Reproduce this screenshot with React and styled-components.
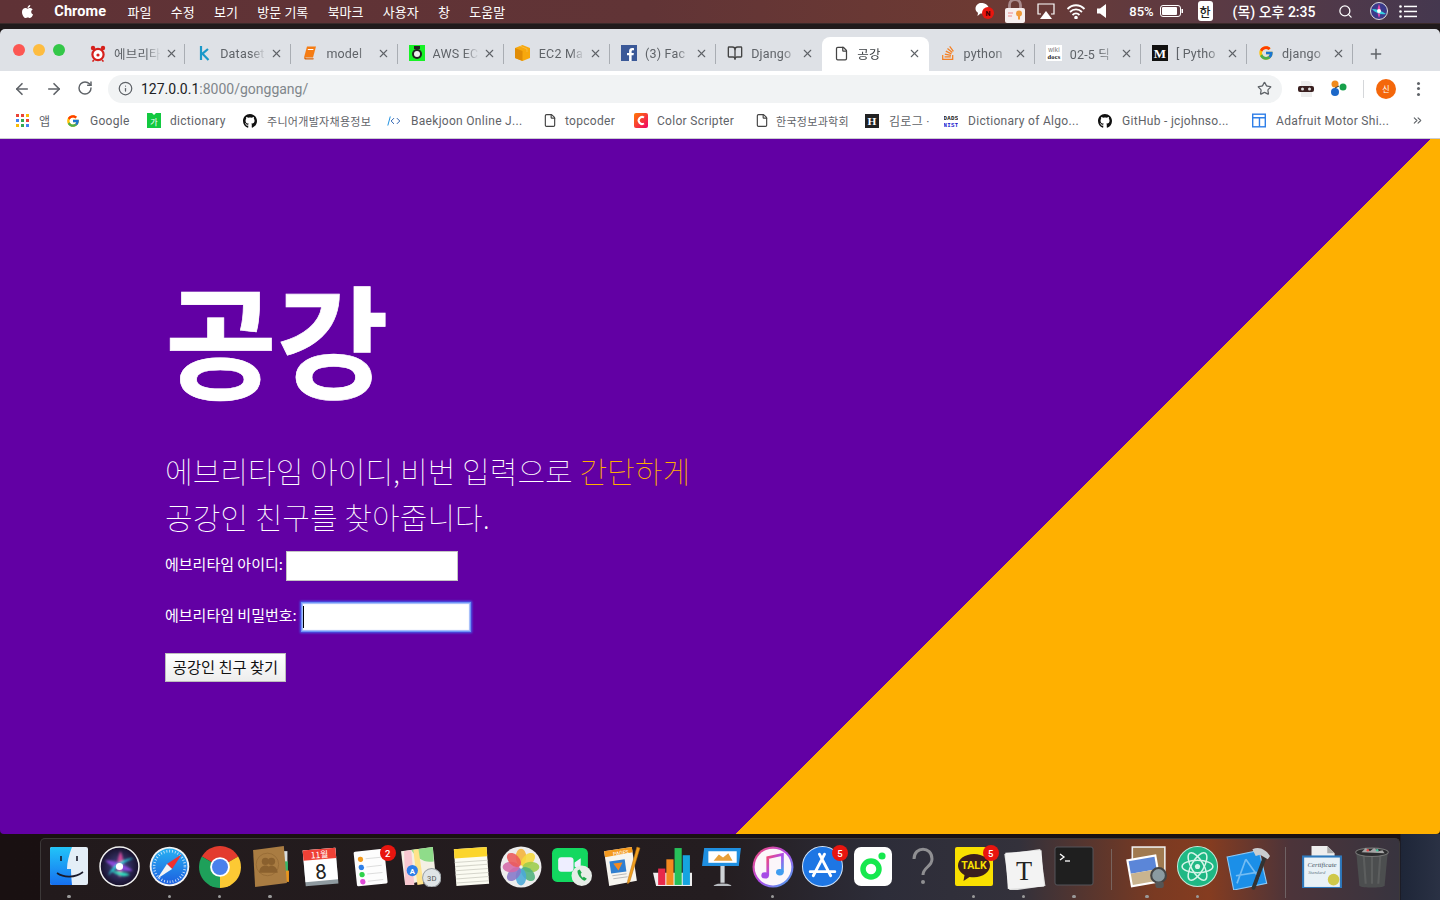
import React from 'react';
import styled, { createGlobalStyle } from 'styled-components';
import { ArrowLeft, ArrowRight, RotateCw, Info, Star, X, Plus, ChevronsRight, Search, File, BookOpen } from 'lucide-react';
import { FaApple, FaGithub, FaFacebookF, FaStackOverflow } from 'react-icons/fa';
import { FcGoogle } from 'react-icons/fc';

const KR = `Roboto, "Noto Sans CJK KR", sans-serif`;

const GlobalStyle = createGlobalStyle`
  html, body { margin: 0; padding: 0; height: 100%; overflow: hidden; background: #191315; }
  * { box-sizing: border-box; }
`;

const Screen = styled.div`
  width: 1440px;
  height: 900px;
  display: flex;
  flex-direction: column;
  font-family: ${KR};
  background: #171213;
  overflow: hidden;
`;

/* mac menu bar */
const MenuBar = styled.div`
  height: 23px;
  flex: none;
  display: flex;
  align-items: center;
  justify-content: space-between;
  padding: 0 17px 1px 20px;
  color: #fff;
  font-size: 13px;
  background: linear-gradient(90deg, #5f3236 0%, #613436 45%, #6d3a33 68%, #5a3a44 85%, #45384f 100%);
`;

const MenuLeft = styled.div`
  display: flex;
  align-items: center;
  gap: 19.3px;
`;

const AppName = styled.span`
  font-weight: 700;
  font-size: 14.5px;
  width: 54px;
  letter-spacing: 0.1px;
`;

const MenuRight = styled.div`
  display: flex;
  align-items: center;
`;

const Status = styled.span`
  display: flex;
  align-items: center;
  justify-content: center;
  width: ${p => p.$w}px;
  margin-left: ${p => p.$ml || 0}px;
  font-weight: 500;
  font-size: ${p => p.$fs || 13}px;
  white-space: nowrap;
`;

const BehindWindow = styled.div`
  height: 6px;
  flex: none;
  background: #201a1b;
  border-top: 1px solid #3a2a2a;
`;

/* chrome window */
const Browser = styled.div`
  height: 805px;
  flex: none;
  display: flex;
  flex-direction: column;
  border-radius: 5px 5px 4px 4px;
  overflow: hidden;
`;

const TabStrip = styled.div`
  height: 42px;
  flex: none;
  display: flex;
  align-items: flex-end;
  background: #dee1e6;
  padding-left: 13px;
`;

const Lights = styled.div`
  width: 66px;
  height: 100%;
  flex: none;
  display: flex;
  gap: 8px;
  padding-top: 15px;
`;

const Light = styled.i`
  width: 12px;
  height: 12px;
  border-radius: 50%;
  background: ${p => p.$c};
`;

const Tab = styled.div`
  width: 106.2px;
  height: 34px;
  flex: none;
  display: flex;
  align-items: center;
  padding: 0 8px 2px 11px;
  position: relative;
  color: #5f6368;
  font-size: 12.5px;
  letter-spacing: 0.2px;
  border-radius: 8px 8px 0 0;
  background: ${p => (p.$active ? '#fff' : 'transparent')};
  ${p => (p.$active ? 'color: #3c4043;' : '')}
  &::after {
    content: '';
    position: absolute;
    right: 0;
    top: 7px;
    height: 20px;
    width: 1px;
    background: ${p => (p.$line ? '#a9adb3' : 'transparent')};
  }
`;

const TabIcon = styled.span`
  width: 16px;
  height: 16px;
  flex: none;
  display: flex;
  align-items: center;
  justify-content: center;
`;

const TabTitle = styled.span`
  flex: 1;
  margin-left: 8px;
  white-space: nowrap;
  -webkit-mask-image: linear-gradient(90deg, #000 68%, transparent 100%);
  mask-image: linear-gradient(90deg, #000 68%, transparent 100%);
`;

const TabClose = styled(X)`
  flex: none;
  color: #5f6368;
  margin-left: 4px;
`;

const NewTab = styled(Plus)`
  flex: none;
  color: #5f6368;
  margin: 0 0 9px 15px;
`;

const Toolbar = styled.div`
  height: 34px;
  flex: none;
  display: flex;
  align-items: center;
  background: #fff;
  color: #5f6368;
  padding: 1px 14px 0 13px;
`;

const NavButtons = styled.div`
  width: 95px;
  flex: none;
  display: flex;
  gap: 14px;
`;

const Omnibox = styled.div`
  width: 1174px;
  height: 28px;
  flex: none;
  display: flex;
  align-items: center;
  padding: 0 10px 0 10px;
  border-radius: 14px;
  background: #f1f3f4;
  font-size: 14px;
  color: #202124;
  gap: 8px;
`;

const Url = styled.span`
  flex: 1;
  span { color: #80868b; }
`;

const Extensions = styled.div`
  flex: 1;
  display: flex;
  align-items: center;
  padding-left: 16px;
  gap: 16px;
`;

const Divider = styled.i`
  width: 1px;
  height: 18px;
  background: #d5d7da;
`;

const Avatar = styled.span`
  width: 20px;
  height: 20px;
  margin-left: -4px;
  border-radius: 50%;
  background: #f4670b;
  color: #fff;
  font-size: 8px;
  display: flex;
  align-items: center;
  justify-content: center;
`;

const Dots = styled.span`
  display: flex;
  flex-direction: column;
  gap: 2.5px;
  margin-left: 5px;
  i { width: 3px; height: 3px; border-radius: 50%; background: #5f6368; }
`;

const BookmarkBar = styled.div`
  height: 34px;
  flex: none;
  display: flex;
  align-items: center;
  background: #fff;
  border-bottom: 1px solid #c9ccd0;
  padding: 0 0 2px 15px;
  font-size: 12px;
  color: #5f6368;
`;

const Bookmark = styled.div`
  width: ${p => p.$w}px;
  flex: none;
  display: flex;
  align-items: center;
  gap: ${p => p.$gap || 10}px;
  white-space: nowrap;
  letter-spacing: 0.3px;
  font-size: ${p => (p.$small ? 11 : 12)}px;
`;

const BookmarkIcon = styled.span`
  width: 14px;
  height: 14px;
  flex: none;
  display: flex;
  align-items: center;
  justify-content: center;
`;

/* the actual page */
const Page = styled.main`
  flex: 1;
  padding: 137px 0 0 165px;
  color: #fff;
  font-family: "Noto Sans CJK KR", sans-serif;
  background: linear-gradient(135deg, #6200a4 1011.3px, #ffb000 1011.8px);
`;

const Title = styled.h1`
  margin: 0 0 52px;
  font-size: 121.500px;
  line-height: 120px;
  font-weight: 700;
  -webkit-text-stroke: 0.7px #fff;
`;

const Lead = styled.p`
  margin: 0 0 12px;
  font-size: 30.1px;
  line-height: 45.6px;
  font-weight: 100;
  em { font-style: normal; color: #ffb000; }
`;

const Row = styled.div`
  display: flex;
  align-items: center;
  gap: 3px;
  height: 30px;
  margin-bottom: 21px;
  font-size: 15px;
  span { padding-bottom: 6px; }
`;

const FieldWrap = styled.div`
  position: relative;
  margin-left: 1px;
`;

const Field = styled.input`
  display: block;
  width: ${p => (p.$focus ? 170 : 172)}px;
  height: 30px;
  background: #fff;
  border: 1px solid ${p => (p.$focus ? '#6f93f7' : '#c4c4c4')};
  outline: none;
  box-shadow: ${p => (p.$focus ? '0 0 2px 1px #4260ee, inset 0 0 1px 1px #9fb8fa' : 'none')};
`;

const Caret = styled.i`
  position: absolute;
  left: 2px;
  top: 4px;
  width: 1px;
  height: 22px;
  background: #000;
`;

const Submit = styled.button`
  display: block;
  width: 121px;
  height: 29px;
  padding: 0 0 3px;
  border: 1px solid #bdbdbd;
  background: linear-gradient(#fff, #ededed);
  color: #111;
  font-family: inherit;
  font-size: 15.3px;
`;

/* dock */
const DockArea = styled.div`
  flex: 1;
  padding: 4px 40px 0;
  background: linear-gradient(90deg, #191011 0, #1a1214 1400px, #1e2638 1401px, #2a3144 100%);
`;

const Dock = styled.div`
  height: 62px;
  display: flex;
  padding-left: 3px;
  border-radius: 5px 5px 0 0;
  border: 1px solid #3c3838;
  border-bottom: none;
  background: linear-gradient(90deg, #221a1c 0%, #241d20 50%, #2d2d39 62%, #33313b 72%, #7a3a22 82%, #853c20 86%, #4c343a 92%, #38343f 100%);
`;

const Slot = styled.div`
  width: 50.25px;
  flex: none;
  position: relative;
  display: flex;
  justify-content: center;
  padding-top: 7px;
  svg { display: block; }
`;

const Badge = styled.span`
  position: absolute;
  top: 6px;
  right: 0;
  width: 16px;
  height: 16px;
  border-radius: 50%;
  background: #e8150f;
  color: #fff;
  font-size: 9.5px;
  font-weight: 500;
  display: flex;
  align-items: center;
  justify-content: center;
`;

const RunDot = styled.i`
  position: absolute;
  bottom: 2px;
  left: 50%;
  width: 3.5px;
  height: 3.5px;
  margin-left: -2px;
  border-radius: 50%;
  background: #9a9a9a;
`;

const Sep = styled.i`
  width: ${p => p.$w}px;
  flex: none;
  position: relative;
  &::after {
    content: '';
    position: absolute;
    left: 50%;
    top: ${p => p.$t}px;
    bottom: ${p => p.$b}px;
    width: 1px;
    background: #8a8a8a88;
  }
`;

const FaceBox = styled.span`
  display: flex;
  width: 16px;
  height: 16px;
  background: #3b5998;
  align-items: flex-end;
  justify-content: flex-end;
  color: #fff;
`;

const ImeBox = styled.span`
  display: flex;
  width: 15px;
  height: 20px;
  border-radius: 3px;
  background: #fff;
  color: #222;
  font-size: 12px;
  align-items: center;
  justify-content: center;
`;

const Svg = ({ children, s = 40 }) => (
  <svg width={s} height={s} viewBox="0 0 40 40">{children}</svg>
);

/* ---------- small favicon drawings ---------- */
const Alarm = () => (
  <svg width="16" height="17" viewBox="0 0 16 17">
    <circle cx="8" cy="9.5" r="5.6" fill="#fff" stroke="#d6201c" strokeWidth="2.2" />
    <circle cx="3" cy="3" r="2.2" fill="#d6201c" /><circle cx="13" cy="3" r="2.2" fill="#d6201c" />
    <path d="M4 15l-1.5 1.5M12 15l1.5 1.5" stroke="#d6201c" strokeWidth="1.6" />
    <circle cx="8" cy="10" r="1.6" fill="#d6201c" />
  </svg>
);
const Kaggle = () => <svg width="16" height="16" viewBox="0 0 16 16"><path d="M5 1v14M12.500 15L6.500 8.700 12 4" fill="none" stroke="#1a98c9" strokeWidth="2.2" /></svg>;
const Book = () => <svg width="16" height="16" viewBox="0 0 16 16"><path d="M5 1.5h9l-3 11H2z" fill="#f57c13" /><path d="M2 12.5c.3 1.7 1 2 2 2h7.4l.4-1.3H4.5c-1 0-1-.7-.7-.7z" fill="#d9660a" /><path d="M5.8 4.5h5.6" stroke="#fff" strokeWidth="1" /></svg>;
const AwsClock = () => (
  <svg width="16" height="16" viewBox="0 0 16 16">
    <rect width="16" height="16" fill="#17f226" />
    <circle cx="8" cy="9" r="5" fill="#222" /><circle cx="8" cy="9" r="3" fill="#eee" />
    <rect x="5" y="1" width="6" height="3" fill="#222" />
  </svg>
);
const Cube = () => <svg width="15" height="16" viewBox="0 0 15 16"><path d="M7.5 0L15 3v10l-7.5 3L0 13V3z" fill="#f7a80d" /><path d="M7.5 6v10L0 13V3z" fill="#e08c06" /><path d="M5 1l7 3v3" fill="none" stroke="#fff3" /></svg>;
const Face = () => <FaceBox><FaFacebookF size={13} /></FaceBox>;
const Wikidocs = () => (
  <svg width="16" height="16" viewBox="0 0 16 16">
    <rect width="16" height="16" fill="#fff" />
    <text x="8" y="7" textAnchor="middle" fontSize="6.5" fill="#777" fontFamily="Liberation Sans">wiki</text>
    <text x="8" y="14" textAnchor="middle" fontSize="6.5" fontWeight="700" fill="#222" fontFamily="Liberation Serif">docs</text>
  </svg>
);
const Medium = () => (
  <svg width="16" height="16" viewBox="0 0 16 16">
    <rect width="16" height="16" fill="#111" />
    <text x="8" y="13" textAnchor="middle" fontSize="13" fontWeight="700" fill="#fff" fontFamily="Liberation Serif">M</text>
  </svg>
);

const AppsGrid = () => (
  <svg width="13" height="13" viewBox="0 0 13 13">
    {['#ea4335', '#ea4335', '#fbbc05', '#4285f4', '#34a853', '#ea4335', '#fbbc05', '#34a853', '#4285f4'].map((c, i) => (
      <rect key={i} x={(i % 3) * 5} y={Math.floor(i / 3) * 5} width="3" height="3" fill={c} />
    ))}
  </svg>
);
const Dict = () => (
  <svg width="14" height="15" viewBox="0 0 14 15">
    <path d="M0 0h5l2 2 2-2h5v15H0z" fill="#12c940" />
    <text x="7" y="12" textAnchor="middle" fontSize="8" fill="#fff" fontFamily="Noto Sans CJK KR">가</text>
  </svg>
);
const Code = () => <svg width="17" height="12" viewBox="0 0 17 12"><path d="M4 0.5L1 11.5" stroke="#1e90e0" strokeWidth="1.2" /><path d="M8.5 2.500L5 6l3.500 3.500M12 2.500L15.500 6 12 9.500" fill="none" stroke="#2a5fb0" strokeWidth="1.2" /></svg>;
const ColorS = () => (
  <svg width="14" height="15" viewBox="0 0 14 15">
    <defs><linearGradient id="cs" x1="0" y1="0" x2="1" y2="1"><stop offset="0" stopColor="#ff7a00" /><stop offset="1" stopColor="#f0006a" /></linearGradient></defs>
    <rect width="14" height="15" rx="2" fill="url(#cs)" />
    <path d="M10 4.5a3.5 3.5 0 1 0 0 6" fill="none" stroke="#fff" strokeWidth="2" />
  </svg>
);
const HLogo = () => (
  <svg width="16" height="16" viewBox="0 0 16 16">
    <rect width="16" height="16" fill="#222" />
    <text x="8" y="13" textAnchor="middle" fontSize="13" fontWeight="700" fill="#fff" fontFamily="Liberation Serif">H</text>
  </svg>
);
const Dads = () => (
  <svg width="16" height="16" viewBox="0 0 16 16">
    <text x="8" y="7" textAnchor="middle" fontSize="6.6" fontWeight="700" fill="#111" fontFamily="Liberation Mono">DADS</text>
    <text x="8" y="14.5" textAnchor="middle" fontSize="6.6" fontWeight="700" fill="#1a1ad0" fontFamily="Liberation Mono">NIST</text>
  </svg>
);
const Sheet = () => (
  <svg width="15" height="15" viewBox="0 0 15 15">
    <rect x="0.75" y="0.75" width="13.5" height="13.5" fill="none" stroke="#2f7fe8" strokeWidth="1.5" />
    <path d="M1 4.5h13M8 4.5V14" stroke="#2f7fe8" strokeWidth="1.5" />
  </svg>
);

/* ---------- dock drawings ---------- */
const Finder = () => (
  <Svg>
    <defs>
      <linearGradient id="fb" x1="0" y1="0" x2="0" y2="1"><stop offset="0" stopColor="#22c4f8" /><stop offset="1" stopColor="#1670f0" /></linearGradient>
    </defs>
    <rect x="1" y="1" width="38" height="38" rx="2" fill="#e4eef7" />
    <path d="M3 1h20c-3 8-5 15-5 22h4c0 5 .6 11 1 16H3a2 2 0 0 1-2-2V3a2 2 0 0 1 2-2z" fill="url(#fb)" />
    <path d="M12 10v5M28 10v5" stroke="#1a1a2a" strokeWidth="1.6" />
    <path d="M8 27c7 5 18 5 26-1" fill="none" stroke="#1a1a2a" strokeWidth="1.6" />
  </Svg>
);
const Siri = () => (
  <Svg s={41}>
    <defs>
      <radialGradient id="sr" cx="0.5" cy="0.5" r="0.5"><stop offset="0" stopColor="#4a4a90" /><stop offset="1" stopColor="#17102a" /></radialGradient>
      <filter id="sb"><feGaussianBlur stdDeviation="1" /></filter>
    </defs>
    <circle cx="20" cy="20" r="19" fill="url(#sr)" stroke="#f0f0f0" strokeWidth="1.5" />
    <g filter="url(#sb)">
      <path d="M21 5c4 8 3 18-1 26-3-8-3-18 1-26z" fill="#d04a9a" />
      <path d="M6 14c9 0 19 4 27 10-9 2-20-2-27-10z" fill="#8a4ad8" />
      <path d="M34 12c-8 3-18 9-25 17 3-9 14-17 25-17z" fill="#26d0d8" />
      <path d="M12 24c5 1 12 1 18 4-6 3-13 1-18-4z" fill="#30e0c0" />
    </g>
    <circle cx="20" cy="20" r="3.5" fill="#fff" />
  </Svg>
);
const Safari = () => (
  <Svg s={41}>
    <defs>
      <linearGradient id="sf" x1="0" y1="0" x2="0" y2="1"><stop offset="0" stopColor="#27b0f2" /><stop offset="1" stopColor="#1d5fe0" /></linearGradient>
    </defs>
    <circle cx="20" cy="20" r="19.3" fill="#f4f4f4" />
    <circle cx="20" cy="20" r="17.5" fill="url(#sf)" />
    <circle cx="20" cy="20" r="15" fill="none" stroke="#d5e8fb" strokeWidth="2.5" strokeDasharray="0.8 2" />
    <path d="M32 8L17.500 17.500l5 5z" fill="#f0302e" /><path d="M8 32l14.500-9.500-5-5z" fill="#f4f4f4" />
  </Svg>
);
const ChromeLogo = () => (
  <Svg s={42}>
    <path d="M20 20L37.3 10A20 20 0 0 0 2.7 10z" fill="#e33b2e" />
    <path d="M20 20L2.7 10A20 20 0 0 0 20 40z" fill="#1ea05a" />
    <path d="M20 20L20 40A20 20 0 0 0 37.3 10z" fill="#fcc934" />
    <circle cx="20" cy="20" r="9.4" fill="#fff" /><circle cx="20" cy="20" r="7.6" fill="#4a80ec" />
  </Svg>
);
const Contacts = () => (
  <Svg s={41}>
    <rect x="33" y="5" width="3.500" height="11" fill="#d8dde0" /><rect x="34" y="15" width="3" height="10" fill="#38b86a" /><rect x="35" y="24" width="3" height="11" fill="#e8961e" />
    <path d="M3 4L33 0l3 36-31 4z" fill="#a97c42" />
    <circle cx="17" cy="18" r="11" fill="none" stroke="#946a35" strokeWidth="0.800" />
    <circle cx="15" cy="15" r="3.500" fill="#8a602e" /><circle cx="21" cy="15" r="3.500" fill="#8a602e" />
    <path d="M9 26c0-5 3-7 6-7s6 2 6 7zM16 26c0-5 3-7 5-7s6 2 6 7z" fill="#8a602e" />
  </Svg>
);
const Calendar = () => (
  <Svg s={41}>
    <g transform="rotate(-5 20 20)">
      <rect x="4" y="3" width="32" height="35" fill="#8f9aa0" />
      <rect x="4" y="3" width="32" height="31" fill="#fff" />
      <rect x="4" y="3" width="32" height="10" fill="#ef4136" />
      <text x="20" y="11.5" textAnchor="middle" fontSize="8.5" fill="#fff" fontFamily="Noto Sans CJK KR">11월</text>
      <text x="20" y="32" textAnchor="middle" fontSize="20" fill="#222" fontFamily="Roboto">8</text>
    </g>
  </Svg>
);
const Reminders = () => (
  <Svg s={41}>
    <g transform="rotate(-6 20 20)">
      <rect x="5" y="4" width="30" height="34" rx="1.5" fill="#fdfdfd" />
      <circle cx="11" cy="12" r="2.6" fill="#f39a1d" /><circle cx="11" cy="20" r="2.6" fill="#2f7fe8" />
      <circle cx="11" cy="27" r="2.6" fill="#2fd24a" /><circle cx="11" cy="34" r="2.6" fill="#e04ad8" />
      <path d="M16 12h15M16 20h15M16 27h15M16 34h15" stroke="#ddd" />
    </g>
  </Svg>
);
const Maps = () => (
  <Svg s={41}>
    <path d="M1 5l31-4 3 30-30 7z" fill="#f4f0e4" />
    <path d="M11 4l21-3 1 14c-9 2-17-3-22-11z" fill="#8fdc8a" />
    <path d="M4 5l7-1 3 34-9 0z" fill="#f8c8d0" /><path d="M13 4l5-1 5 34-6 1z" fill="#ffe38a" />
    <circle cx="12" cy="24" r="5.5" fill="#2f7fe8" />
    <text x="12" y="27" textAnchor="middle" fontSize="7.5" fontWeight="700" fill="#fff" fontFamily="Roboto">A</text>
    <circle cx="31" cy="31" r="9" fill="#dfe4e6" stroke="#9aa0a4" />
    <text x="31" y="34" textAnchor="middle" fontSize="7.5" fill="#555" fontFamily="Roboto">3D</text>
  </Svg>
);
const Notes = () => (
  <Svg s={41}>
    <g transform="rotate(-4 20 20)">
      <rect x="4" y="2" width="32" height="36" fill="#fbfbf2" />
      <rect x="4" y="2" width="32" height="9" fill="#fbd52c" />
      <path d="M4 15h32M4 19h32M4 23h32M4 27h32M4 31h32M4 35h32" stroke="#d5d5cb" />
    </g>
  </Svg>
);
const Photos = () => (
  <Svg s={42}>
    <circle cx="20" cy="20" r="19.5" fill="#ededed" />
    {['#f4b33a', '#f6d93c', '#9ccc4a', '#4fb27d', '#4aa8d8', '#8578c8', '#d469a8', '#ea5a5a'].map((c, i) => (
      <ellipse key={c} cx="20" cy="10.5" rx="5" ry="8" fill={c} opacity="0.88" transform={`rotate(${i * 45} 20 20)`} />
    ))}
  </Svg>
);
const FaceTime = () => (
  <Svg s={41}>
    <rect x="1" y="2" width="35" height="33" rx="5" fill="#13d860" />
    <rect x="7" y="11" width="15" height="14" rx="3" fill="#eef" /><path d="M23 16l6-4v12l-6-4z" fill="#eef" />
    <circle cx="30" cy="29" r="10" fill="#e6ece7" />
    <path d="M26 24c-1 3 3 9 7 10l2-2-3-2-1 1c-1-1-2-2-2-4l1-1-2-3z" fill="#1ca94a" />
  </Svg>
);
const Pages = () => (
  <Svg s={41}>
    <path d="M3 5l27-4 5 33-27 5z" fill="#f7f5ef" />
    <path d="M3 5l27-4 1 5-27 5z" fill="#f49a1f" />
    <text x="12" y="9.5" fontSize="5" fill="#fff" fontFamily="Roboto" transform="rotate(-8 12 9)">PAGES</text>
    <rect x="9" y="14" width="15" height="12" fill="#2f7fd0" transform="rotate(-8 16 20)" />
    <path d="M12 17l9-1-4 8z" fill="#f48a1f" />
    <path d="M11 29l14-2M12 32l14-2" stroke="#bbb" />
    <path d="M35 1l3 1-10 33-2 2 0-3z" fill="#f0a020" stroke="#b86e10" strokeWidth="0.5" />
  </Svg>
);
const Numbers = () => (
  <Svg s={41}>
    <path d="M1 26l3 13h35v-13z" fill="#eee" />
    <rect x="6" y="22" width="7" height="16" fill="#e8294a" />
    <rect x="14" y="13" width="7" height="25" fill="#f48a1f" />
    <rect x="22" y="2" width="7" height="36" fill="#27c05a" />
    <rect x="30" y="9" width="7" height="29" fill="#16a4e0" />
  </Svg>
);
const Keynote = () => (
  <Svg s={42}>
    <path d="M3 2h35l-2 17H1z" fill="#1f8fe0" />
    <rect x="7" y="5" width="27" height="11" fill="#fff" />
    <path d="M12 14l5-6 4 3 5-4 4 7z" fill="#e8a03a" />
    <rect x="18.5" y="19" width="4" height="16" fill="#cfd3d6" />
    <path d="M12 38c2-3 15-3 17 0z" fill="#b8bcc0" />
  </Svg>
);
const Music = () => (
  <Svg s={42}>
    <defs>
      <linearGradient id="mu" x1="0" y1="0" x2="1" y2="1"><stop offset="0" stopColor="#f5486e" /><stop offset="0.5" stopColor="#b24be8" /><stop offset="1" stopColor="#3ab0f0" /></linearGradient>
    </defs>
    <circle cx="20" cy="20" r="19.5" fill="url(#mu)" /><circle cx="20" cy="20" r="17.5" fill="#fbf6fa" />
    <path d="M15 28V11l14-3v17" fill="none" stroke="url(#mu)" strokeWidth="2.6" />
    <ellipse cx="12.5" cy="28" rx="3.6" ry="3" fill="#a64be6" /><ellipse cx="26.5" cy="25" rx="3.6" ry="3" fill="#3f9cf0" />
  </Svg>
);
const AppStore = () => (
  <Svg s={41}>
    <circle cx="20" cy="20" r="19.5" fill="#1d76e4" stroke="#cfe2f8" />
    <path d="M22 8L11 29M17 8l11 21M8 25h24" stroke="#fff" strokeWidth="2.8" strokeLinecap="round" />
  </Svg>
);
const Molecule = () => (
  <Svg s={40}>
    <rect x="1" y="1" width="38" height="39" rx="7" fill="#fff" />
    <circle cx="18" cy="23" r="8" fill="none" stroke="#16e84e" strokeWidth="5.5" />
    <circle cx="29" cy="10" r="3.6" fill="#16e84e" />
  </Svg>
);
const Unknown = () => <Svg s={40}><path d="M11 13c0-13 18-13 18 0 0 8-9 8-9 16" fill="none" stroke="#8f8f92" strokeWidth="3" /><circle cx="20" cy="36" r="2" fill="#8f8f92" /></Svg>;
const Talk = () => (
  <Svg s={40}>
    <rect x="1" y="1" width="38" height="39" rx="2" fill="#f9e000" />
    <path d="M20 8c-9 0-16 5-16 11.500 0 4 3 7.500 6.500 9.500l-1 6 6-4c1.500.2 3 .3 4.500.3 9 0 16-5.300 16-11.800S29 8 20 8z" fill="#3b1e1e" />
    <text x="20" y="23" textAnchor="middle" fontSize="10.500" fontWeight="700" fill="#f9e000" fontFamily="Roboto">TALK</text>
  </Svg>
);
const Typora = () => (
  <Svg s={44}>
    <rect x="4" y="5" width="33" height="34" fill="#ddd" transform="rotate(-8 20 20)" />
    <rect x="4" y="5" width="33" height="33" fill="#f3f3f3" transform="rotate(-4 20 20)" />
    <text x="20" y="31" textAnchor="middle" fontSize="24" fill="#222" fontFamily="Liberation Serif">T</text>
  </Svg>
);
const Terminal = () => (
  <Svg s={40}>
    <rect x="1" y="1" width="38" height="38" rx="2" fill="#1f1f1f" stroke="#55555a" />
    <path d="M6 8l4 3-4 3" fill="none" stroke="#fff" strokeWidth="1.300" />
    <path d="M11 15h5" stroke="#fff" strokeWidth="1.300" />
  </Svg>
);
const Preview = () => (
  <Svg s={42}>
    <rect x="6" y="1" width="31" height="26" fill="#a07a50" stroke="#eee" strokeWidth="1.500" />
    <g transform="rotate(-10 18 22)">
      <rect x="2" y="10" width="29" height="27" fill="#fff" />
      <rect x="4" y="12" width="25" height="12" fill="#5b86d8" />
      <rect x="4" y="24" width="25" height="11" fill="#c9b48f" />
    </g>
    <circle cx="31" cy="28" r="7" fill="#8a9aa0" stroke="#444" strokeWidth="2" />
    <rect x="28" y="34" width="8" height="6" rx="2" fill="#555" />
  </Svg>
);
const Atom = () => (
  <Svg s={41}>
    <circle cx="20" cy="20" r="19.500" fill="#1fb884" stroke="#bfe9d9" />
    <g fill="none" stroke="#d7f5e9" strokeWidth="1.500">
      <ellipse cx="20" cy="20" rx="15" ry="6" />
      <ellipse cx="20" cy="20" rx="15" ry="6" transform="rotate(60 20 20)" />
      <ellipse cx="20" cy="20" rx="15" ry="6" transform="rotate(120 20 20)" />
    </g>
    <circle cx="20" cy="20" r="2.500" fill="#d7f5e9" />
  </Svg>
);
const Xcode = () => (
  <Svg s={44}>
    <path d="M1 10l29-6 7 30-30 6z" fill="#1b8fe8" stroke="#8cc8f5" />
    <path d="M18 12L10 34M18 12l12 17M9 27l19-3" fill="none" stroke="#74bdf3" strokeWidth="1.500" />
    <path d="M36 8L25 38" stroke="#333" strokeWidth="3.500" strokeLinecap="round" />
    <path d="M24 3c6-3 12 0 16 6l-2 3-7-4-4 1z" fill="#c9cdd0" />
  </Svg>
);
const Certificate = () => (
  <Svg s={42}>
    <path d="M10 0h15l7 7v8H10z" fill="#eee" /><path d="M25 0l7 7h-7z" fill="#aaa" />
    <rect x="2" y="10" width="36" height="30" fill="#e9f1f6" stroke="#2e79bd" strokeWidth="2" />
    <text x="20" y="20" textAnchor="middle" fontSize="6.500" fontStyle="italic" fill="#456" fontFamily="Liberation Serif">Certificate</text>
    <text x="15" y="27" textAnchor="middle" fontSize="4.500" fontStyle="italic" fill="#678" fontFamily="Liberation Serif">Standard</text>
    <circle cx="31" cy="32" r="5.500" fill="#cfc84a" />
  </Svg>
);
const Trash = () => (
  <Svg s={42}>
    <path d="M5 6h30l-3 32c-3 2-21 2-24 0z" fill="#4c4e4f" />
    <path d="M12 8l2 28M20 8v28M28 8l-2 28" stroke="#5c5e5e" strokeWidth="2" />
    <ellipse cx="20" cy="6" rx="15.500" ry="4" fill="#2c2c2e" stroke="#777" />
    <path d="M10 6l4-4 4 3 4-3 4 3 4-1 2 3z" fill="#a5a5a5" />
    <circle cx="16" cy="4" r="1.200" fill="#e04a4a" /><circle cx="25" cy="4" r="1.200" fill="#4ac0a0" />
  </Svg>
);

const Comment = () => (
  <svg width="20" height="18" viewBox="0 0 20 18">
    <path d="M6 1C3 1 .5 3.500 .5 6.500c0 2 1 3.500 2.500 4.300L2.500 14l3-2.500c2 .3 4-.2 6-2 2-2 3-4 1-6C11 1.500 8 1 6 1z" fill="#fff" />
    <circle cx="13" cy="11" r="6" fill="#e8160f" />
    <text x="13" y="13.500" textAnchor="middle" fontSize="7" fontWeight="700" fill="#300" fontFamily="Roboto">N</text>
  </svg>
);
const LockBag = () => (
  <svg width="22" height="23" viewBox="0 0 22 23">
    <path d="M5.500 9V5a5.500 5.500 0 0 1 11 0v4" fill="none" stroke="#a98a8c" strokeWidth="2.800" />
    <rect x="1" y="8" width="20" height="15" rx="2" fill="#f7eeee" />
    <circle cx="15" cy="13.500" r="3" fill="#f09a3a" /><path d="M14 16h2v4l-1-1-1 1z" fill="#f09a3a" />
    <path d="M4 13h5M4 16h4" stroke="#e88" />
  </svg>
);
const AirPlay = () => <svg width="18" height="16" viewBox="0 0 18 16"><path d="M4 11H1V1h16v10h-3" fill="none" stroke="#fff" strokeWidth="1.200" /><path d="M9 8l6 8H3z" fill="#fff" /></svg>;
const WifiIcon = () => <svg width="20" height="15" viewBox="0 0 19 15" fill="none" stroke="#fff" strokeWidth="1.800"><path d="M1 5c5-5 12-5 17 0M3.500 8c3.500-3.500 8.500-3.500 12 0M6 11c2-2 5-2 7 0" /><circle cx="9.500" cy="13.500" r="0.900" fill="#fff" /></svg>;
const Speaker = () => <svg width="10" height="14" viewBox="0 0 10 14"><path d="M0 4.500h3L9 0v14L3 9.500H0z" fill="#fff" /></svg>;
const Battery = () => <svg width="23" height="12" viewBox="0 0 23 12"><rect x="0.500" y="0.500" width="20" height="11" rx="2.500" fill="none" stroke="#fff" /><rect x="2" y="2" width="15" height="8" rx="1" fill="#fff" /><rect x="21.500" y="4" width="1.500" height="4" fill="#fff" /></svg>;
const HanIme = () => <ImeBox>한</ImeBox>;
const SiriSmall = () => (
  <svg width="18" height="18" viewBox="0 0 18 18">
    <circle cx="9" cy="9" r="8.500" fill="#3a3a8a" stroke="#ddd" />
    <path d="M9 2c2 4 2 10 0 14-2-4-2-10 0-14z" fill="#e04aa8" /><path d="M2 7c5 0 10 2 14 5-5 1-11-1-14-5z" fill="#35d0e0" />
    <circle cx="9" cy="9" r="2" fill="#fff" />
  </svg>
);
const ListIcon = () => <svg width="18" height="13" viewBox="0 0 18 13" fill="#fff"><circle cx="1.500" cy="1.500" r="1.300" /><circle cx="1.500" cy="6.500" r="1.300" /><circle cx="1.500" cy="11.500" r="1.300" /><rect x="5" y="0.700" width="13" height="1.500" /><rect x="5" y="5.700" width="13" height="1.500" /><rect x="5" y="10.700" width="13" height="1.500" /></svg>;
const Spy = () => <svg width="16" height="16" viewBox="0 0 16 16"><path d="M3 0h8l3 3v13H3z" fill="#eee" /><rect x="0" y="5" width="16" height="6" rx="2" fill="#3a2020" /><circle cx="4.500" cy="8" r="1.500" fill="#ddd" /><circle cx="11.500" cy="8" r="1.500" fill="#ddd" /></svg>;
const Pigment = () => <svg width="17" height="18" viewBox="0 0 17 18"><circle cx="5" cy="4" r="3.500" fill="#f08a1d" /><circle cx="13" cy="7" r="3.500" fill="#17a04a" /><circle cx="5" cy="12" r="4" fill="#1c68c9" /><path d="M5 8l4-2" stroke="#333" /></svg>;

const tabs = [
  { icon: <Alarm />, title: '에브리타', line: true },
  { icon: <Kaggle />, title: 'Dataset', line: true },
  { icon: <Book />, title: 'model', line: true },
  { icon: <AwsClock />, title: 'AWS EC', line: true },
  { icon: <Cube />, title: 'EC2 Ma', line: true },
  { icon: <Face />, title: '(3) Fac', line: true },
  { icon: <BookOpen size={16} color="#444" />, title: 'Django' },
  { icon: <File size={15} color="#444" />, title: '공강', active: true },
  { icon: <FaStackOverflow size={16} color="#f48024" />, title: 'python', line: true },
  { icon: <Wikidocs />, title: '02-5 딕', line: true },
  { icon: <Medium />, title: '[ Pytho', line: true },
  { icon: <FcGoogle size={16} />, title: 'django', line: true },
];

const bookmarks = [
  { w: 51, icon: <AppsGrid />, label: '앱' },
  { w: 81, icon: <FcGoogle size={14} />, label: 'Google' },
  { w: 96, icon: <Dict />, label: 'dictionary', gap: 9 },
  { w: 144, icon: <FaGithub size={16} color="#111" />, label: '주니어개발자채용정보', small: true },
  { w: 156, icon: <Code />, label: 'Baekjoon Online J...' },
  { w: 91, icon: <File size={15} color="#444" />, label: 'topcoder', gap: 8 },
  { w: 121, icon: <ColorS />, label: 'Color Scripter', gap: 9 },
  { w: 110, icon: <File size={15} color="#444" />, label: '한국정보과학회', gap: 7, small: true },
  { w: 79, icon: <HLogo />, label: '김로그 ·' },
  { w: 154, icon: <Dads />, label: 'Dictionary of Algo...' },
  { w: 154, icon: <FaGithub size={16} color="#111" />, label: 'GitHub - jcjohnso...' },
  { w: 159, icon: <Sheet />, label: 'Adafruit Motor Shi...' },
];

const dockLeft = [
  { el: <Finder />, run: true }, { el: <Siri /> }, { el: <Safari />, run: true }, { el: <ChromeLogo />, run: true },
  { el: <Contacts />, run: true }, { el: <Calendar /> }, { el: <Reminders />, badge: '2' }, { el: <Maps /> },
  { el: <Notes /> }, { el: <Photos /> }, { el: <FaceTime /> }, { el: <Pages /> }, { el: <Numbers /> }, { el: <Keynote /> },
  { el: <Music />, run: true }, { el: <AppStore />, badge: '5' }, { el: <Molecule /> }, { el: <Unknown /> },
  { el: <Talk />, badge: '5', run: true }, { el: <Typora />, run: true }, { el: <Terminal />, run: true },
];
const dockMid = [{ el: <Preview />, run: true }, { el: <Atom />, run: true }, { el: <Xcode /> }];
const dockEnd = [{ el: <Certificate /> }, { el: <Trash /> }];

const DockItem = ({ el, badge, run }) => (
  <Slot>
    {el}
    {badge && <Badge>{badge}</Badge>}
    {run && <RunDot />}
  </Slot>
);

const App = () => (
  <Screen>
    <GlobalStyle />
    <MenuBar>
      <MenuLeft>
        <FaApple size={15} />
        <AppName>Chrome</AppName>
        <span>파일</span><span>수정</span><span>보기</span><span>방문 기록</span><span>북마크</span><span>사용자</span><span>창</span><span>도움말</span>
      </MenuLeft>
      <MenuRight>
        <Status $w={26}><Comment /></Status>
        <Status $w={34}><LockBag /></Status>
        <Status $w={28}><AirPlay /></Status>
        <Status $w={32}><WifiIcon /></Status>
        <Status $w={20}><Speaker /></Status>
        <Status $w={27} $ml={16}>85%</Status>
        <Status $w={32}><Battery /></Status>
        <Status $w={36}><HanIme /></Status>
        <Status $w={102} $fs={14}>(목) 오후 2:35</Status>
        <Status $w={40}><Search size={15} /></Status>
        <Status $w={28}><SiriSmall /></Status>
        <Status $w={30}><ListIcon /></Status>
      </MenuRight>
    </MenuBar>
    <BehindWindow />
    <Browser>
      <TabStrip>
        <Lights>
          <Light $c="#fc5753" /><Light $c="#fdbc40" /><Light $c="#33c748" />
        </Lights>
        {tabs.map(t => (
          <Tab key={t.title} $active={t.active} $line={t.line}>
            <TabIcon>{t.icon}</TabIcon>
            <TabTitle>{t.title}</TabTitle>
            <TabClose size={13} strokeWidth={2} />
          </Tab>
        ))}
        <NewTab size={16} strokeWidth={2.2} />
      </TabStrip>
      <Toolbar>
        <NavButtons>
          <ArrowLeft size={18} strokeWidth={2.2} />
          <ArrowRight size={18} strokeWidth={2.2} />
          <RotateCw size={16} strokeWidth={2.2} />
        </NavButtons>
        <Omnibox>
          <Info size={15} color="#5f6368" />
          <Url>127.0.0.1<span>:8000/gonggang/</span></Url>
          <Star size={15} color="#5f6368" />
        </Omnibox>
        <Extensions>
          <Spy />
          <Pigment />
          <Divider />
          <Avatar>신</Avatar>
          <Dots><i /><i /><i /></Dots>
        </Extensions>
      </Toolbar>
      <BookmarkBar>
        {bookmarks.map(b => (
          <Bookmark key={b.label} $w={b.w} $gap={b.gap} $small={b.small}>
            <BookmarkIcon>{b.icon}</BookmarkIcon>
            <span>{b.label}</span>
          </Bookmark>
        ))}
        <ChevronsRight size={13} />
      </BookmarkBar>
      <Page>
        <Title>공강</Title>
        <Lead>에브리타임 아이디,비번 입력으로 <em>간단하게</em><br />공강인 친구를 찾아줍니다.</Lead>
        <Row>
          <span>에브리타임 아이디:</span>
          <Field type="text" />
        </Row>
        <Row>
          <span>에브리타임 비밀번호:</span>
          <FieldWrap>
            <Field type="password" $focus />
            <Caret />
          </FieldWrap>
        </Row>
        <Submit>공강인 친구 찾기</Submit>
      </Page>
    </Browser>
    <DockArea>
      <Dock>
        {dockLeft.map((d, i) => <DockItem key={i} {...d} />)}
        <Sep $w={23} $t={10} $b={10} />
        {dockMid.map((d, i) => <DockItem key={i} {...d} />)}
        <Sep $w={24} $t={8} $b={2} />
        {dockEnd.map((d, i) => <DockItem key={i} {...d} />)}
      </Dock>
    </DockArea>
  </Screen>
);

export default App;
